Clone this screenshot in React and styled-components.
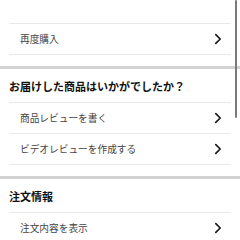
import React from 'react'
import styled, { createGlobalStyle } from 'styled-components'

const GlobalStyle = createGlobalStyle`
    html, body {
        margin: 0;
        padding: 0;
        background: #fff;
        overflow: hidden;
    }
    body {
        font-family: "Noto Sans CJK JP", "Noto Sans", sans-serif;
    }
`

const sections = [
    {
        title: null,
        items: ['再度購入'],
    },
    {
        title: 'お届けした商品はいかがでしたか？',
        items: ['商品レビューを書く', 'ビデオレビューを作成する'],
    },
    {
        title: '注文情報',
        items: ['注文内容を表示'],
    },
]

function Chevron() {
    return (
        <svg width="8" height="12" viewBox="0 0 8 12">
            <polyline
                points="1.8,1.6 6.2,6 1.8,10.4"
                fill="none"
                stroke="#1a1a1a"
                strokeWidth="1.7"
                strokeLinecap="round"
                strokeLinejoin="round"
            />
        </svg>
    )
}

function App() {
    return (
        <Page>
            <GlobalStyle />
            {sections.map((section, i) => (
                <React.Fragment key={i}>
                    {i > 0 && <Band />}
                    <Section last={i === sections.length - 1}>
                        {section.title ? (
                            <Heading>{section.title}</Heading>
                        ) : (
                            <TopGap />
                        )}
                        {section.items.map((item) => (
                            <Row key={item}>
                                <Label>{item}</Label>
                                <Chevron />
                            </Row>
                        ))}
                    </Section>
                </React.Fragment>
            ))}
            <ScrollThumb />
        </Page>
    )
}

export default App

const Page = styled.div`
    position: relative;
    width: 240px;
    height: 240px;
    overflow: hidden;
    background: #fff;
`
const Section = styled.div`
    display: flex;
    flex-direction: column;
    padding: 0 9px ${props => props.last ? '0' : '11px'} 9px;
`
const TopGap = styled.div`
    height: 23px;
    border-bottom: 1px solid #e8e8e8;
`
const Heading = styled.div`
    height: 34px;
    display: flex;
    align-items: center;
    padding-top: 1px;
    box-sizing: border-box;
    font-size: 11px;
    font-weight: 700;
    color: #111;
    border-bottom: 1px solid #e8e8e8;
`
const Row = styled.div`
    height: 31px;
    display: flex;
    align-items: center;
    justify-content: space-between;
    padding: 0 9px 0 11px;
    box-sizing: border-box;
    border-bottom: 1px solid #e8e8e8;
`
const Label = styled.span`
    font-size: 9.7px;
    color: #444;
`
const Band = styled.div`
    height: 3px;
    background: #d2d2d2;
`
const ScrollThumb = styled.div`
    position: absolute;
    top: 0;
    right: 3px;
    width: 2px;
    height: 118px;
    border-radius: 1px;
    background: #7a7a7a;
`
